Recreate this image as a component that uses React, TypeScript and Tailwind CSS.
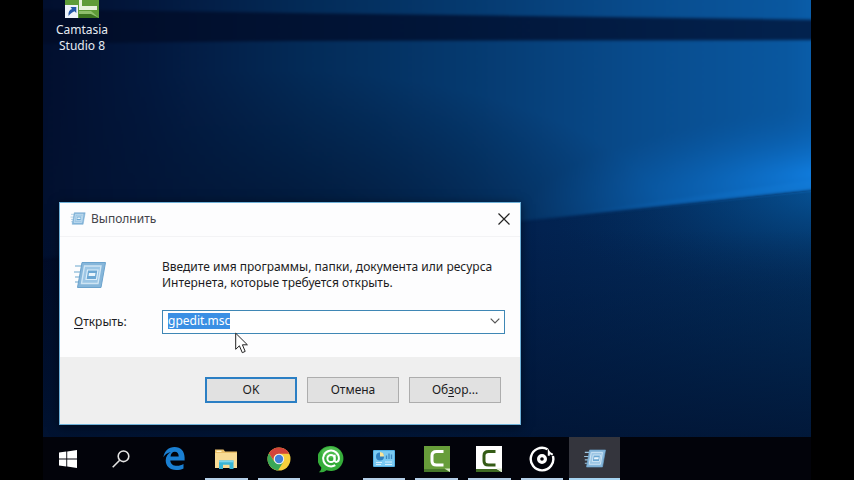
import React, { useEffect, useRef } from "react";

const Wallpaper = () => (
  <svg
    className="absolute inset-0 size-full"
    viewBox="0 0 768 437"
    preserveAspectRatio="none"
    aria-hidden="true"
  >
    <defs>
      <linearGradient id="base" x1="0" y1="0" x2="1" y2="0">
        <stop offset="0" stopColor="#010b26" />
        <stop offset="0.3" stopColor="#01163a" />
        <stop offset="0.65" stopColor="#022250" />
        <stop offset="1" stopColor="#03305f" />
      </linearGradient>
      <linearGradient id="sky" x1="0" y1="0" x2="1" y2="0">
        <stop offset="0" stopColor="#010d2b" />
        <stop offset="0.15" stopColor="#02173d" />
        <stop offset="0.35" stopColor="#032b58" />
        <stop offset="0.55" stopColor="#053a70" />
        <stop offset="0.75" stopColor="#084b8c" />
        <stop offset="0.93" stopColor="#09579f" />
        <stop offset="1" stopColor="#0a63b4" />
      </linearGradient>
      <radialGradient
        id="shade"
        gradientUnits="userSpaceOnUse"
        cx="0"
        cy="0"
        r="1"
        gradientTransform="translate(230 240) scale(400 170)"
      >
        <stop offset="0" stopColor="#01122f" stopOpacity="0.8" />
        <stop offset="1" stopColor="#01122f" stopOpacity="0" />
      </radialGradient>
      <radialGradient
        id="glow"
        gradientUnits="userSpaceOnUse"
        cx="0"
        cy="0"
        r="1"
        gradientTransform="translate(785 172) rotate(-7) scale(300 70)"
      >
        <stop offset="0" stopColor="#1286ee" stopOpacity="0.8" />
        <stop offset="0.5" stopColor="#0c70cc" stopOpacity="0.4" />
        <stop offset="1" stopColor="#0a5cab" stopOpacity="0" />
      </radialGradient>
      <linearGradient id="ray" x1="0" y1="0" x2="1" y2="0">
        <stop offset="0" stopColor="#0a5cab" stopOpacity="0" />
        <stop offset="1" stopColor="#1584e4" />
      </linearGradient>
      <linearGradient id="band" x1="0" y1="0" x2="1" y2="0">
        <stop offset="0" stopColor="#010b26" />
        <stop offset="0.5" stopColor="#011538" />
        <stop offset="1" stopColor="#022350" />
      </linearGradient>
      <linearGradient id="floor" x1="0" y1="0" x2="0" y2="1">
        <stop offset="0" stopColor="#011433" stopOpacity="0" />
        <stop offset="1" stopColor="#011433" stopOpacity="0.85" />
      </linearGradient>
      <radialGradient
        id="reflection"
        gradientUnits="userSpaceOnUse"
        cx="0"
        cy="0"
        r="1"
        gradientTransform="translate(790 190) scale(290 120)"
      >
        <stop offset="0" stopColor="#07589f" stopOpacity="0.9" />
        <stop offset="0.5" stopColor="#054583" stopOpacity="0.4" />
        <stop offset="1" stopColor="#032b5c" stopOpacity="0" />
      </radialGradient>
      <filter id="soft" colorInterpolationFilters="sRGB">
        <feGaussianBlur stdDeviation="1.5" />
      </filter>
    </defs>
    <rect width="768" height="437" fill="url(#base)" />
    <path d="M478 223L768 191V330H478Z" fill="url(#reflection)" />
    <g filter="url(#soft)">
      <path d="M-20 -40H800V187L478 221L-20 260Z" fill="url(#sky)" />
      <path d="M-20 -40H800V187L478 221L-20 260Z" fill="url(#shade)" />
      <path d="M400 60H800V187L478 221Z" fill="url(#glow)" />
      <path d="M478 221L800 176V187Z" fill="url(#ray)" opacity="0.5" />
      <path d="M-20 9L250 13L800 20V40L250 41L-20 44Z" fill="url(#band)" />
    </g>
    <rect y="230" width="768" height="207" fill="url(#floor)" />
  </svg>
);

const RunIcon = ({ className }: { className: string }) => (
  <svg viewBox="0 0 32 28" className={className} aria-hidden="true">
    <path d="M1 5h10M0 11h8M1 16h7M1 21h6" stroke="#9cc4de" strokeWidth="1.6" />
    <path d="M8 1.5h23.5L27 26.5H3.5Z" fill="#86b6da" stroke="#6ba3cd" />
    <path d="M10.500 5h16.500l-3 17.500H7.500Z" fill="#9cc6e5" stroke="#cfe5f4" strokeWidth="1.400" />
    <path d="M13.500 9h10.500l-1.600 9.500H12Z" fill="#6ba7d3" stroke="#dceefa" strokeWidth="1.200" />
    <path d="M15 12h6.500l-.5 3h-6.500Z" fill="#e9f5fc" />
  </svg>
);

const WindowsIcon = () => (
  <svg viewBox="0 0 18 18" className="size-[18px]" fill="#fff">
    <path d="M0 2.6 7.3 1.6V8.5H0ZM8.2 1.45 18 0V8.5H8.2ZM0 9.4H7.3V16.4L0 15.4ZM8.2 9.4H18V18L8.2 16.6Z" />
  </svg>
);

const SearchIcon = () => (
  <svg viewBox="0 0 18 18" className="size-[18px]" fill="none" stroke="#e4e4e4" strokeWidth="1.6">
    <circle cx="11.5" cy="6.3" r="5.3" />
    <path d="M7.7 10.2.7 17.3" />
  </svg>
);

const EdgeIcon = () => (
  <svg viewBox="0 0 22 23" className="h-[23px] w-[22px]" fill="#1a7fd2">
    <path d="M.4 10.2C1.3 4 5.7 0 11.5 0 18 0 21.6 4.6 21.6 10.6V13.4H7.3C7.5 17 10.3 18.8 14 18.8c2.500 0 4.600-.7 6.500-1.800v4.500C18.400 22.500 16 23 13.100 23 6.800 23 2.700 19.300 2.700 13.600c0-3.700 2-6.800 5.200-8.500C4.700 5.700 2 7.600.4 10.200ZM7.500 9.500h8.200c0-3-1.400-4.700-3.900-4.700-2.300 0-3.900 1.800-4.300 4.700Z" />
  </svg>
);

const FolderIcon = () => (
  <svg viewBox="0 0 24 22" className="h-[22px] w-6">
    <path d="M1 1.500h8.500l1.500 2h12V19H1Z" fill="#e9c06a" />
    <path d="M1 5h22v15H1Z" fill="#f8db95" />
    <path d="M2.500 2.700h5v1.300h-5Z" fill="#fff3cb" />
    <path d="M5 12.500h14.500v8.500h-4v-4.300H9V21H5Z" fill="#38b6d6" />
    <path d="M5 12.500h14.500v1.800H5Z" fill="#7ad6ee" />
  </svg>
);

const ChromeIcon = () => (
  <svg viewBox="0 0 24 24" className="size-6">
    <circle cx="12" cy="12" r="11.500" fill="#f6cf3c" />
    <path d="M2 6.300A11.500 11.500 0 0 0 11 23.450L16.600 14.600 12 12 7.400 14.700Z" fill="#3aa757" />
    <path d="M2 6.300A11.500 11.500 0 0 1 22.200 6.700H12a5.300 5.300 0 0 0-5 7.400Z" fill="#d2443a" />
    <circle cx="12" cy="12" r="5.200" fill="#f3f3f3" />
    <circle cx="12" cy="12" r="4.200" fill="#3f7fd8" />
  </svg>
);

const AgentIcon = () => (
  <svg viewBox="0 0 26 28" className="h-7 w-[26px]">
    <path d="M13 1a12.500 12.500 0 1 1-4.500 24.200C6.500 27 3.500 27.600.8 27.300 2.500 26 3.300 24.500 3.300 22.500A12.500 12.500 0 0 1 13 1Z" fill="#35ad3a" />
    <ellipse cx="13" cy="7.500" rx="9.500" ry="5.500" fill="#5cc75a" opacity="0.6" />
    <g fill="none" stroke="#fff" strokeWidth="2">
      <circle cx="13" cy="13.500" r="3.600" />
      <path d="M16.600 9.700v5.200c0 3.200 4.300 2.500 4.300-1.400a7.900 7.900 0 1 0-3.600 6.600" />
    </g>
  </svg>
);

const PanelIcon = () => (
  <svg viewBox="0 0 22 17" className="h-[17px] w-[22px]">
    <rect width="22" height="17" rx="1" fill="#55b2e6" />
    <rect x="1" y="1" width="20" height="15" fill="#7bcaf2" />
    <circle cx="7" cy="6.500" r="4" fill="#2f7fbf" />
    <path d="M7 6.500V2a4.300 4.300 0 0 1 4 4.500Z" fill="#fbe59a" />
    <path d="M13.500 9V5.500M16 9V3.500M18.500 9V4.500" stroke="#3f88c0" strokeWidth="1.300" />
    <path d="M3 12.500h6M3 14.500h5M12 12h7M12 14.500h7" stroke="#d3edfb" />
  </svg>
);

const CamtasiaIcon = ({ green = false }: { green?: boolean }) => (
  <svg viewBox="0 0 26 26" className="size-[26px]">
    <path d="M0 0h26v26H22L0 23Z" fill={green ? "#679d3a" : "#fff"} />
    <path d="M0 23h20.500l5 3H0Z" fill={green ? "#47782a" : "#3f6a22"} />
    <path d="M20.500 22.500H26V26Z" fill="#d7e8c8" />
    <path
      d="M19.500 5.500H12.500c-3 0-4.500 1.300-4.500 4v5.500c0 2.700 1.500 4 4.500 4h7"
      fill="none"
      stroke={green ? "#fff" : "#345b16"}
      strokeWidth="3"
    />
  </svg>
);

const GrooveIcon = () => (
  <svg viewBox="0 0 26 26" className="size-[26px]" fill="none" stroke="#fff">
    <path d="M18.500 3.200A11.300 11.300 0 1 0 23.900 10" strokeWidth="2.400" />
    <circle cx="13" cy="13" r="3.400" strokeWidth="3.200" />
    <path d="M19.800 9.800V5.800c1 1.800 2.400 2.200 4 2.800" strokeWidth="2" />
  </svg>
);

const tasks = [
  { label: "Пуск", icon: <WindowsIcon /> },
  { label: "Поиск", icon: <SearchIcon /> },
  { label: "Microsoft Edge", icon: <EdgeIcon /> },
  { label: "Проводник", icon: <FolderIcon />, open: true },
  { label: "Google Chrome", icon: <ChromeIcon />, open: true },
  { label: "Агент", icon: <AgentIcon /> },
  { label: "Панель управления", icon: <PanelIcon />, open: true },
  { label: "Camtasia Studio", icon: <CamtasiaIcon green />, open: true },
  { label: "Camtasia Recorder", icon: <CamtasiaIcon />, open: true },
  { label: "Музыка Groove", icon: <GrooveIcon />, open: true },
  { label: "Выполнить", icon: <RunIcon className="h-[19px] w-6" />, open: true, active: true },
];

const Taskbar = () => (
  <nav className="relative h-[43px] bg-[#02030a]">
    <div className="grid h-full w-full max-w-[577px] grid-cols-11 gap-0.5">
      {tasks.map((task) => (
        <button
          key={task.label}
          aria-label={task.label}
          className={`relative flex items-center justify-center ${task.active ? "bg-[#34353d]" : ""}`}
        >
          {task.icon}
          {task.open && (
            <span
              className={`absolute bottom-0 h-0.5 ${
                task.active ? "inset-x-0 bg-[#a5d3f0]" : "inset-x-1 bg-[#b4cfe8]"
              }`}
            />
          )}
        </button>
      ))}
    </div>
  </nav>
);

const RunDialog = () => {
  const input = useRef<HTMLInputElement>(null);

  useEffect(() => {
    input.current?.focus();
    input.current?.select();
  }, []);

  return (
    <form
      role="dialog"
      aria-labelledby="run-title"
      onSubmit={(e) => e.preventDefault()}
      className="absolute top-[202px] left-4 w-[462px] border border-[#6fb1d8] bg-[#fdfdfe] text-[#1c1c22] shadow-[0_2px_10px_rgba(0,0,0,0.5)]"
    >
      <header className="flex h-[34px] items-center border-b border-[#f3f3f5] px-2.5 pb-0.5">
        <RunIcon className="h-[13px] w-4" />
        <h1 id="run-title" className="ml-[5px] text-[#44444a]">
          Выполнить
        </h1>
        <button type="button" aria-label="Закрыть" className="ml-auto">
          <svg viewBox="0 0 12 12" className="size-3" fill="none" stroke="#222" strokeWidth="1.200">
            <path d="m.5.5 11 11m0-11-11 11" />
          </svg>
        </button>
      </header>
      <div className="grid grid-cols-[88px_1fr] gap-y-[19px] pt-[22px] pr-[15px] pb-[23px] pl-3.5">
        <RunIcon className="h-7 w-8 self-center" />
        <p className="leading-4">
          Введите имя программы, папки, документа или ресурса Интернета, которые требуется открыть.
        </p>
        <label htmlFor="run-command" className="self-center">
          <span className="underline underline-offset-2">О</span>ткрыть:
        </label>
        <div className="flex h-6 items-center border border-[#3f87b5] bg-white pr-1 pb-0.5 pl-[5px]">
          <input
            id="run-command"
            ref={input}
            defaultValue="gpedit.msc"
            className="h-4 min-w-0 flex-1 leading-4 outline-none selection:bg-[#3a8fe4] selection:text-white"
          />
          <button type="button" aria-label="Показать список">
            <svg viewBox="0 0 10 6" className="h-1.5 w-2.5" fill="none" stroke="#555" strokeWidth="1.200">
              <path d="m.7.7 4.300 4.300L9.300.7" />
            </svg>
          </button>
        </div>
      </div>
      <footer className="flex justify-end gap-2.5 bg-[#efefef] pt-5 pr-[19px] pb-[21px]">
        <button type="submit" className="h-[26px] w-[92px] border-2 border-[#2b7fc4] bg-[#e1e1e1]">
          OK
        </button>
        <button type="button" className="h-[26px] w-[92px] border border-[#adadad] bg-[#e1e1e1]">
          Отмена
        </button>
        <button type="button" className="h-[26px] w-[92px] border border-[#adadad] bg-[#e1e1e1]">
          Об<span className="underline underline-offset-2">з</span>ор...
        </button>
      </footer>
    </form>
  );
};

const App = () => {
  return (
    <div className="flex min-h-screen flex-col bg-black px-[43px] font-['Noto_Sans','Open_Sans',sans-serif] text-xs">
      <main className="relative flex-1 overflow-hidden">
        <Wallpaper />
        <a href="#camtasia" className="relative flex w-[78px] flex-col items-center text-center leading-4 text-[#e6ebf2]">
          <svg viewBox="0 0 34 19" className="h-[19px] w-[34px]">
            <path d="M0 0h34v18H0Z" fill="#5f9c38" />
            <path d="M14 0h3v6h15v4H14Z" fill="#e7f2dc" />
            <path d="M14 11h12l8 7H14Z" fill="#8fc06c" />
            <path d="M14 14h12l8 4H14Z" fill="#3c7420" />
            <rect y="5" width="13" height="13" fill="#eef3f9" />
            <path d="M3.500 16C3 12 4.500 9.800 7 9L5.500 7H11.300V13L9.500 11.200C7.500 12 5.500 13.500 3.500 16Z" fill="#2458a8" />
          </svg>
          <span className="mt-[3px]">Camtasia Studio 8</span>
        </a>
        <RunDialog />
        <svg
          viewBox="0 0 14 22"
          className="absolute top-[332px] left-[192px] h-[22px] w-3.5"
          fill="#fff"
          stroke="#222"
          aria-hidden="true"
        >
          <path d="M.7 1.200V17.300L4.400 13.800 7.300 20.700 10.200 19.400 7.400 12.800H12.400Z" />
        </svg>
      </main>
      <Taskbar />
    </div>
  );
};

export default App;
